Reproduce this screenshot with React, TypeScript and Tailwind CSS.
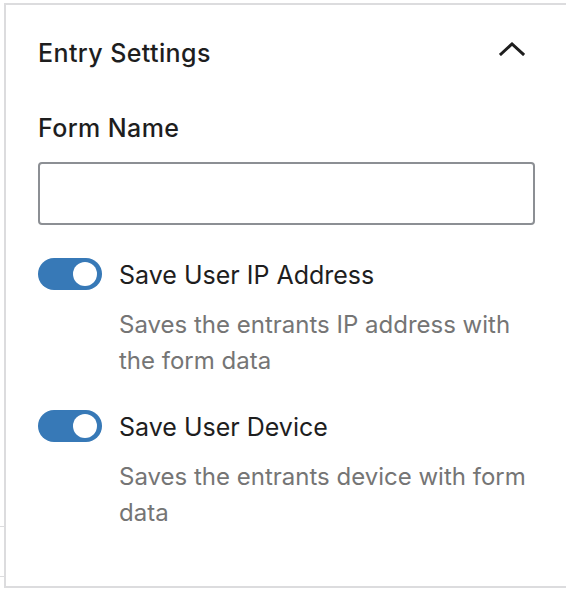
function Toggle({ label, help }: { label: string; help: string[] }) {
  return (
    <div>
      <div className="flex items-center gap-[17px] h-[32px]">
        <div className="w-[64px] h-[32px] rounded-full bg-[#3779b7] flex items-center justify-end pr-[5px]">
          <div className="w-[24px] h-[24px] rounded-full bg-white" />
        </div>
        <span className="text-[25px] leading-[32px] text-[#1e1e1e] mt-[2px]">{label}</span>
      </div>
      <p className="mt-[17px] pl-[81px] text-[24px] leading-[36px] text-[#757575]">
        {help.map((line) => (
          <span key={line} className="block">{line}</span>
        ))}
      </p>
    </div>
  );
}

export default function App() {
  return (
    <div className="w-[566px] h-[594px] bg-white relative" style={{ fontFamily: "Inter, 'Noto Sans', sans-serif" }}>
      {/* little ticks outside the panel */}
      <div className="absolute left-0 top-[523px] w-[5px] h-[1px] bg-[#dcdcde]" />
      <div className="absolute left-0 top-[573px] w-[5px] h-[1px] bg-[#dcdcde]" />

      <div className="ml-[4px] mt-[3px] h-[585px] border-l-2 border-t-2 border-b-2 border-[#dcdcde] pl-[32px] pr-[31px]">
        <div className="flex items-center justify-between pt-[30px]">
          <h2 className="text-[25px] leading-[36px] font-medium tracking-[0.4px] text-[#1e1e1e]">Entry Settings</h2>
          <svg width="26" height="14" viewBox="0 0 26 14" className="mr-[10px] -mt-[8px]" fill="none">
            <polyline points="2,12 13,2 24,12" stroke="#1e1e1e" strokeWidth="3" strokeLinecap="square" strokeLinejoin="miter" />
          </svg>
        </div>

        <label className="block mt-[41px] text-[25px] leading-[32px] font-medium tracking-[0.4px] text-[#1e1e1e]">Form Name</label>
        <input
          type="text"
          className="block mt-[18px] w-full h-[63px] rounded-[4px] border-2 border-[#8c8f94] bg-white px-4 text-[24px] outline-none"
        />

        <div className="mt-[33px]">
          <Toggle label="Save User IP Address" help={["Saves the entrants IP address with", "the form data"]} />
        </div>
        <div className="mt-[31px]">
          <Toggle label="Save User Device" help={["Saves the entrants device with form", "data"]} />
        </div>
      </div>
    </div>
  );
}
